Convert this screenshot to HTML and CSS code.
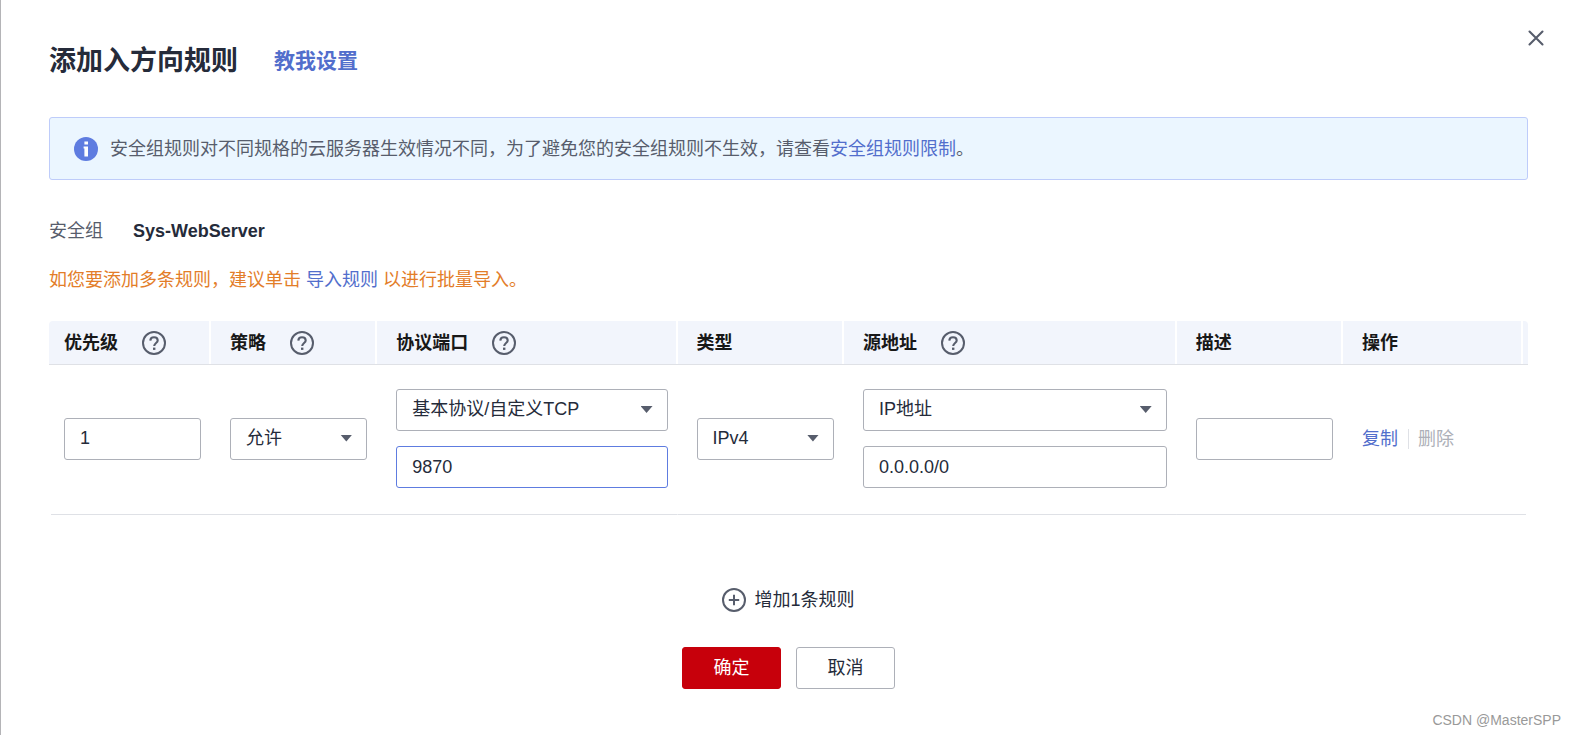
FILE: index.html
```html
<!DOCTYPE html>
<html lang="zh-CN">
<head>
<meta charset="utf-8">
<title>添加入方向规则</title>
<link rel="stylesheet" href="styles.css">
</head>
<body>
<svg class="sprite" aria-hidden="true">
  <symbol id="help" viewBox="0 0 24 24">
    <circle cx="12" cy="12" r="11" fill="none" stroke="#575d6c" stroke-width="2"/>
    <path d="M8.3 9.6C8.4 7.4 9.9 6.2 12 6.2s3.7 1.3 3.7 3.2c0 2.5-3.5 2.7-3.5 5.6" fill="none" stroke="#575d6c" stroke-width="2.1"/>
    <rect x="11" y="16.6" width="2.4" height="2.3" fill="#575d6c"/>
  </symbol>
</svg>
<main class="dialog">
  <button class="close" type="button" aria-label="关闭">
    <svg viewBox="0 0 24 24" width="24" height="24"><path d="M5.5 5.5l13 13M18.5 5.5l-13 13" fill="none" stroke="#575d6c" stroke-width="2.1" stroke-linecap="round"/></svg>
  </button>
  <header class="head">
    <h1 class="title">添加入方向规则</h1>
    <a class="guide" href="#">教我设置</a>
  </header>

  <div class="alert" role="note">
    <svg class="icon" viewBox="0 0 24 24"><circle cx="12" cy="12" r="12" fill="#5e7ce0"/><path d="M10.4 4.6h3.6v2.8h-3.6zM9.6 9.4H14v10h-3.6v-8h-.8z" fill="#fff"/></svg>
    <p class="alert-text">安全组规则对不同规格的云服务器生效情况不同，为了避免您的安全组规则不生效，请查看<a href="#">安全组规则限制</a>。</p>
  </div>

  <div class="group">
    <span class="group-label">安全组</span>
    <strong>Sys-WebServer</strong>
  </div>
  <p class="tip">如您要添加多条规则，建议单击 <a href="#">导入规则</a> 以进行批量导入。</p>

  <table class="rules">
    <colgroup>
      <col class="c-first"><col class="c-small"><col class="c-port"><col class="c-small"><col class="c-source"><col class="c-small"><col><col class="c-end">
    </colgroup>
    <thead>
      <tr>
        <th><div class="th">优先级<svg class="icon"><use href="#help"/></svg></div></th>
        <th><div class="th">策略<svg class="icon"><use href="#help"/></svg></div></th>
        <th><div class="th">协议端口<svg class="icon"><use href="#help"/></svg></div></th>
        <th><div class="th">类型</div></th>
        <th><div class="th">源地址<svg class="icon"><use href="#help"/></svg></div></th>
        <th><div class="th">描述</div></th>
        <th><div class="th">操作</div></th>
        <td></td>
      </tr>
    </thead>
    <tbody>
      <tr>
        <td><input class="field" type="text" value="1" aria-label="优先级"></td>
        <td><div class="select"><select class="field" aria-label="策略"><option>允许</option></select></div></td>
        <td><div class="stack">
          <div class="select"><select class="field" aria-label="协议"><option>基本协议/自定义TCP</option></select></div>
          <input class="field active" type="text" value="9870" aria-label="端口">
        </div></td>
        <td><div class="select"><select class="field" aria-label="类型"><option>IPv4</option></select></div></td>
        <td><div class="stack">
          <div class="select"><select class="field" aria-label="源地址类型"><option>IP地址</option></select></div>
          <input class="field" type="text" value="0.0.0.0/0" aria-label="源地址">
        </div></td>
        <td><input class="field" type="text" value="" aria-label="描述"></td>
        <td colspan="2"><div class="ops"><button class="op" type="button">复制</button><button class="op last" type="button" disabled>删除</button></div></td>
      </tr>
    </tbody>
  </table>

  <button class="add" type="button">
    <svg class="icon" viewBox="0 0 24 24"><circle cx="12" cy="12" r="11" fill="none" stroke="#575d6c" stroke-width="2"/><path d="M12 6.8v10.4M6.8 12h10.4" stroke="#575d6c" stroke-width="2"/></svg>
    增加1条规则
  </button>
  <footer class="actions">
    <button class="btn primary" type="button">确定</button>
    <button class="btn" type="button">取消</button>
  </footer>
  <span class="credit">CSDN @MasterSPP</span>
</main>
</body>
</html>
```

FILE: styles.css
```css
* { box-sizing: border-box; }

body {
  margin: 0;
  background: #fff;
  color: #252b3a;
  font: 18px/26px "Liberation Sans", "Noto Sans CJK SC", sans-serif;
}

button, input, select { font: inherit; color: inherit; }
button { padding: 0; border: 0; background: none; cursor: pointer; }
p, h1 { margin: 0; }
a { color: #526ecc; text-decoration: none; }

.sprite { display: none; }
.icon { width: 24px; height: 24px; flex: none; overflow: visible; }

.dialog {
  position: relative;
  min-height: 100vh;
  padding: 40px 47px 0 48px;
  border-left: 1px solid #b4b4b7;
}

.close { position: absolute; top: 26px; right: 27px; width: 24px; height: 24px; }
.close svg { display: block; }

.head { display: flex; align-items: center; gap: 36px; height: 42px; }
.title { font-size: 27px; line-height: 40px; font-weight: 700; }
.guide { font-size: 21px; line-height: 40px; font-weight: 700; }

.alert {
  display: flex;
  align-items: center;
  gap: 12px;
  margin-top: 35px;
  padding: 18px 24px 17px;
  border: 1px solid #beccfa;
  border-radius: 3px;
  background: #ebf6ff;
}
.alert-text { color: #575d6c; }

.group { display: flex; gap: 30px; margin-top: 38px; }
.group-label { color: #575d6c; }

.tip { margin-top: 23px; color: #e37d29; }

.rules {
  width: 100%;
  margin-top: 28px;
  table-layout: fixed;
  border-collapse: separate;
  border-spacing: 0;
}
.c-first { width: 10.95%; }
.c-small { width: 11.25%; }
.c-port { width: 20.3%; }
.c-source { width: 22.5%; }
.c-end { width: 5px; }

.rules thead th, .rules thead td {
  height: 44px;
  padding: 0 10px 0 19px;
  border-bottom: 1px solid #dfe1e6;
  background: linear-gradient(#fff, #fff) right / 2px 100% no-repeat #f2f5fc;
  color: #181818;
  text-align: left;
}
.rules thead th:first-child { padding-left: 15px; border-top-left-radius: 4px; }
.rules thead td { padding: 0; background: #f2f5fc; border-top-right-radius: 4px; }
.th { display: flex; align-items: center; gap: 24px; }

.rules tbody td {
  padding: 24px 10px 27px 19px;
  background: linear-gradient(#dfe1e6, #dfe1e6) bottom / 100% 1px no-repeat;
  vertical-align: middle;
}
.rules tbody td:first-child { padding-left: 15px; background-position: 2px 100%; }
.rules tbody td:last-child { background-position: -2px 100%; }

.stack { display: grid; gap: 15px; }

.field {
  display: block;
  width: 100%;
  height: 42px;
  padding: 0 15px;
  border: 1px solid #adb0b8;
  border-radius: 3px;
  background: #fff;
  outline: none;
}
.field.active { border-color: #5e7ce0; }
select.field { appearance: none; padding-bottom: 2px; }

.select { position: relative; }
.select::after {
  content: "";
  position: absolute;
  top: 17px;
  right: 15px;
  width: 12px;
  height: 7px;
  background: #575d6c;
  clip-path: polygon(0 0, 100% 0, 50% 100%);
  pointer-events: none;
}

.ops { display: flex; align-items: center; }
.op { color: #526ecc; line-height: 20px; }
.op.last {
  margin-left: 10px;
  padding-left: 9px;
  border-left: 1px solid #dfe1e6;
  color: #adb0b8;
}

.add { display: flex; align-items: center; gap: 8px; margin: 72px auto 0; }
.actions { display: flex; justify-content: center; gap: 15px; margin-top: 34px; }
.btn {
  width: 99px;
  height: 42px;
  border: 1px solid #adb0b8;
  border-radius: 3px;
}
.btn.primary { border-color: #c7000b; background: #c7000b; color: #fff; }

.credit {
  position: absolute;
  right: 14px;
  bottom: 5px;
  color: #999;
  font-size: 14px;
  line-height: 20px;
}
```
